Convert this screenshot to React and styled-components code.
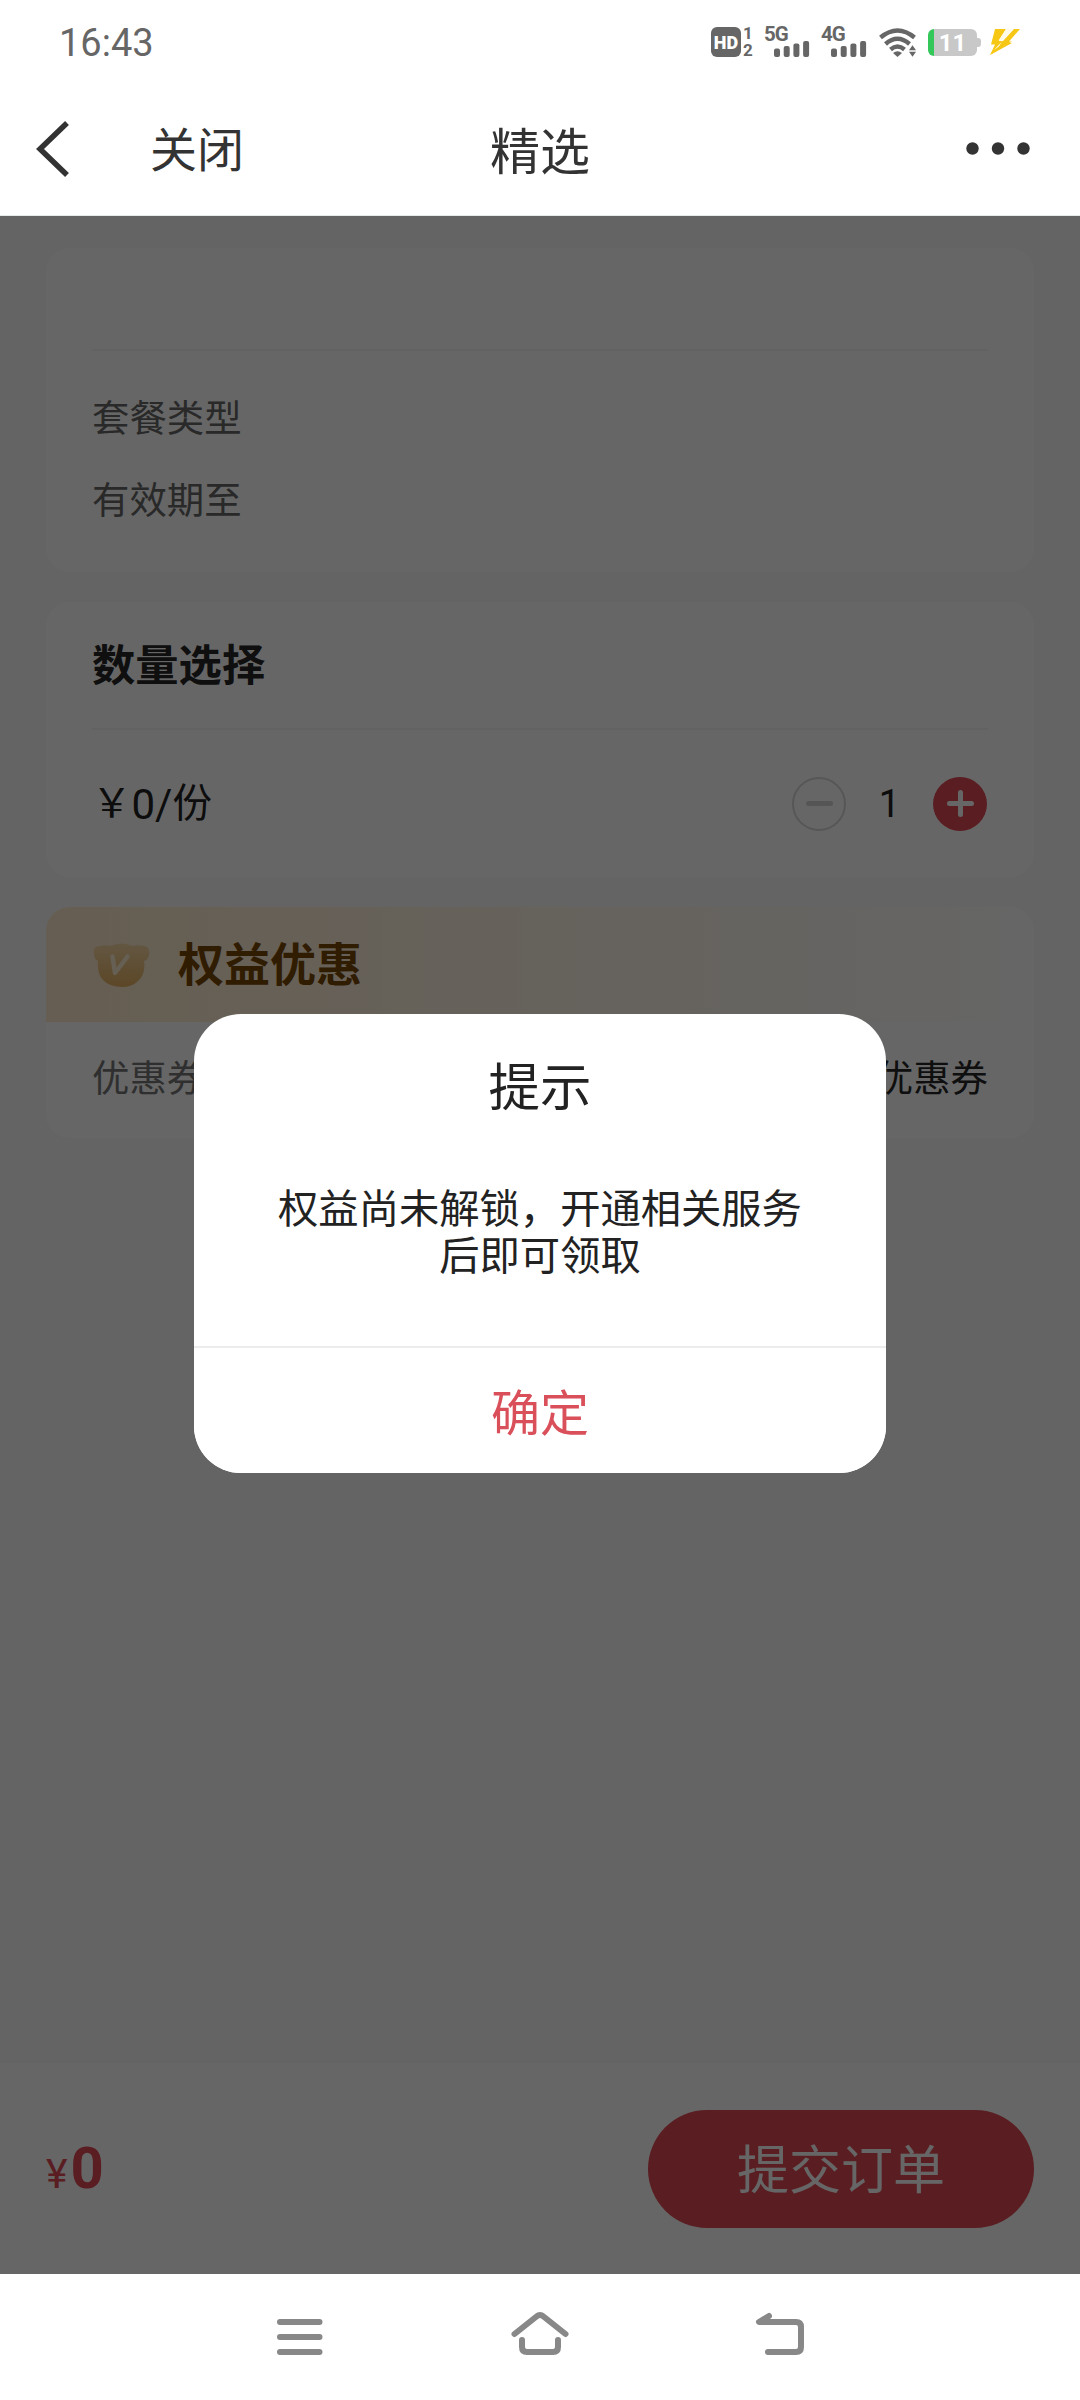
import React, { useState } from "react";
import styled, { createGlobalStyle } from "styled-components";

const BARS = [
  { x: 0, h: 8.5 },
  { x: 9.7, h: 11 },
  { x: 19.4, h: 13.5 },
  { x: 29.1, h: 16 },
];

const Network = ({ label }) => (
  <NetworkBox>
    <span>{label}</span>
    <svg width="36" height="16" viewBox="0 0 36 16">
      {BARS.map((bar) => (
        <rect
          key={bar.x}
          x={bar.x}
          y={16 - bar.h}
          width="6"
          height={bar.h}
          rx="2"
          fill="#666"
        />
      ))}
    </svg>
  </NetworkBox>
);

const WifiIcon = () => (
  <svg width="38" height="30" viewBox="0 0 38 30" fill="none">
    <g stroke="#666" strokeWidth="4.4">
      <path d="M1.5 10.5Q18.5 -3.5 35.5 10.5" />
      <path d="M6.5 17Q18.5 6.5 30.5 17" />
      <path d="M11.5 22.5Q18.5 16.5 25.5 22.5" />
    </g>
    <path d="M14 26Q18.5 22.5 23 26L18.5 30Z" fill="#666" />
    <path d="M30 23.2h7l-3.5 -5zM30 24.8h7l-3.5 5z" fill="#666" />
  </svg>
);

const BoltIcon = () => (
  <svg width="30" height="26" viewBox="0 0 30 26">
    <path
      d="M5 0H16L9 12H13L24 0H30L19 12.5H22L0 26L5 15.5H1Z"
      fill="#f7c716"
    />
    <path d="M16 0L8.5 11.5H13L4 21L14 14H10.5L23 0Z" fill="#fffbe8" />
    <path d="M11 14H22L0 26L8 19Z" fill="#f7c716" />
  </svg>
);

const BackIcon = () => (
  <svg width="34" height="58" viewBox="0 0 34 58" fill="none">
    <path d="M31 3L4 29L31 55" stroke="#333" strokeWidth="5.5" />
  </svg>
);

const MoreIcon = () => (
  <svg width="64" height="13" viewBox="0 0 64 13" fill="#333">
    <circle cx="6.5" cy="6.5" r="6.2" />
    <circle cx="32" cy="6.5" r="6.2" />
    <circle cx="57.5" cy="6.5" r="6.2" />
  </svg>
);

const VipIcon = () => (
  <svg width="57" height="44" viewBox="0 0 57 44">
    <defs>
      <linearGradient id="vip" x1="0" y1="0" x2="0" y2="1">
        <stop offset="0" stopColor="#f7d9a6" />
        <stop offset="1" stopColor="#e6b060" />
      </linearGradient>
    </defs>
    <path
      d="M3 4Q11 1 17 3Q28 -2 40 3Q47 1 54 4Q57 6 56 12Q55 17 51 18Q53 31 45 38Q39 44 29 44Q17 44 10 37Q4 31 5 18Q1 16 1 11Q0 6 3 4Z"
      fill="url(#vip)"
    />
    <path
      d="M19.5 13.5L22 30L34.5 13.5"
      fill="none"
      stroke="#ffeed2"
      strokeWidth="4.5"
      strokeLinecap="round"
      strokeLinejoin="round"
    />
  </svg>
);

const App = () => {
  const [count, setCount] = useState(1);
  const [open, setOpen] = useState(true);

  return (
    <Screen>
      <GlobalStyle />
      <StatusBar>
        <Clock>16:43</Clock>
        <StatusIcons>
          <HdBadge>HD</HdBadge>
          <SimNumbers>
            <span>1</span>
            <span>2</span>
          </SimNumbers>
          <Network label="5G" />
          <Network label="4G" />
          <WifiIcon />
          <Battery>11</Battery>
          <BoltIcon />
        </StatusIcons>
      </StatusBar>
      <Header>
        <HeaderLeft>
          <BackIcon />
          <span>关闭</span>
        </HeaderLeft>
        <h1>精选</h1>
        <HeaderRight>
          <MoreIcon />
        </HeaderRight>
      </Header>

      <Page>
        <Content>
          <Card>
            <CardTitle $height={103} />
            <InfoList>
              <Label>套餐类型</Label>
              <Label>有效期至</Label>
            </InfoList>
          </Card>
          <Card>
            <CardTitle $height={128}>数量选择</CardTitle>
            <CountRow>
              <UnitPrice>
                <span>￥</span>
                <i>0/</i>
                <span>份</span>
              </UnitPrice>
              <Stepper>
                <RoundButton onClick={() => setCount(Math.max(1, count - 1))}>
                  <svg width="27" height="27" viewBox="0 0 27 27">
                    <path d="M2.5 13.5H24.5" />
                  </svg>
                </RoundButton>
                <span>{count}</span>
                <RoundButton $primary onClick={() => setCount(count + 1)}>
                  <svg width="27" height="27" viewBox="0 0 27 27">
                    <path d="M2.5 13.5H24.5M13.5 2.5V24.5" />
                  </svg>
                </RoundButton>
              </Stepper>
            </CountRow>
          </Card>
          <Card>
            <BenefitTitle>
              <VipIcon />
              <span>权益优惠</span>
            </BenefitTitle>
            <CouponRow>
              <Label $color="#777">优惠券</Label>
              <Label $color="#262626">优惠券</Label>
            </CouponRow>
          </Card>
        </Content>
        <Footer>
          <Total>
            <small>¥</small>
            <b>0</b>
          </Total>
          <SubmitButton>提交订单</SubmitButton>
        </Footer>
        {open && (
          <Overlay>
            <Dialog>
              <DialogTitle>提示</DialogTitle>
              <DialogText>权益尚未解锁，开通相关服务后即可领取</DialogText>
              <DialogButton onClick={() => setOpen(false)}>确定</DialogButton>
            </Dialog>
          </Overlay>
        )}
      </Page>

      <NavBar>
        <svg width="58" height="46" viewBox="0 0 58 46">
          <path d="M9 12H48.5M9 27H48.5M9 42H48.5" />
        </svg>
        <svg width="58" height="46" viewBox="0 0 58 46">
          <path d="M3.5 24L25.5 6.5Q29 3.5 32.5 6.5L54.5 24M11 30V37Q11 42 16 42H42Q47 42 47 37V30" />
        </svg>
        <svg width="58" height="46" viewBox="0 0 58 46">
          <path d="M18 6L8 12H45Q50 12 50 17V37Q50 42 45 42H17" />
        </svg>
      </NavBar>
    </Screen>
  );
};

export default App;

const GlobalStyle = createGlobalStyle`
  * {
    box-sizing: border-box;
  }
  body {
    margin: 0;
    background: #fff;
    font-family: Roboto, "Noto Sans CJK SC", sans-serif;
  }
  button {
    border: none;
    padding: 0;
    font-family: inherit;
  }
  svg {
    display: block;
    flex: none;
  }
`;

const Screen = styled.div`
  display: flex;
  flex-direction: column;
  width: 1080px;
  height: 2400px;
  overflow: hidden;
`;

const StatusBar = styled.div`
  display: flex;
  justify-content: space-between;
  align-items: center;
  height: 84px;
  padding: 0 60px 0 59px;
`;

const Clock = styled.div`
  padding-top: 1px;
  font-size: 38px;
  color: #666;
`;

const StatusIcons = styled.div`
  display: flex;
  align-items: center;
`;

const HdBadge = styled.div`
  width: 30px;
  height: 30px;
  border-radius: 6px;
  background: #666;
  color: #fff;
  font-size: 18px;
  font-weight: 900;
  line-height: 31px;
  text-align: center;
`;

const SimNumbers = styled.div`
  display: flex;
  flex-direction: column;
  justify-content: space-between;
  height: 30px;
  width: 10px;
  margin-left: 2px;
  font-size: 17px;
  font-weight: 700;
  line-height: 13px;
  color: #666;
  text-align: center;
`;

const NetworkBox = styled.div`
  display: flex;
  flex-direction: column;
  justify-content: space-between;
  width: 46px;
  height: 30px;
  margin-left: 11px;
  color: #666;
  span {
    font-size: 20.5px;
    font-weight: 700;
    line-height: 14px;
    letter-spacing: -1px;
  }
  svg {
    margin: 0 0 0 10px;
  }
  & + svg {
    margin-left: 12px;
  }
`;

const Battery = styled.div`
  position: relative;
  width: 49px;
  height: 27px;
  margin: 0 13px 0 11px;
  border-radius: 6px;
  background: linear-gradient(to right, #34c759 6px, #c8c8c8 6px);
  color: #fff;
  font-size: 24px;
  font-weight: 700;
  line-height: 28px;
  text-align: center;
  &::after {
    content: "";
    position: absolute;
    right: -4px;
    top: 9px;
    width: 4px;
    height: 9px;
    border-radius: 0 3px 3px 0;
    background: #c8c8c8;
  }
`;

const Header = styled.div`
  display: grid;
  grid-template-columns: 1fr auto 1fr;
  align-items: center;
  height: 132px;
  padding: 0 50px 2px 36px;
  border-bottom: 1px solid #e6eae9;
  color: #333;
  h1 {
    margin: 0 0 1px 14px;
    font-size: 50px;
    font-weight: 400;
  }
`;

const HeaderLeft = styled.div`
  display: flex;
  align-items: center;
  gap: 80px;
  font-size: 47px;
  span {
    padding-bottom: 4px;
  }
`;

const HeaderRight = styled.div`
  display: flex;
  justify-content: flex-end;
`;

const Page = styled.div`
  position: relative;
  display: flex;
  flex-direction: column;
  height: 2058px;
  background: #fbfbfb;
`;

const Content = styled.div`
  display: flex;
  flex-direction: column;
  flex: 1;
  gap: 30px;
  padding: 32px 46px;
`;

const Card = styled.div`
  border-radius: 24px;
  background: #fff;
  overflow: hidden;
`;

const CardTitle = styled.div`
  height: ${(props) => props.$height}px;
  margin: 0 46px;
  border-bottom: 2px solid #f5f5f5;
  font-size: 43.3px;
  font-weight: 700;
  line-height: 130px;
  color: #262626;
`;

const Label = styled.div`
  font-size: 37.4px;
  line-height: 40px;
  color: ${(props) => props.$color || "#666"};
`;

const InfoList = styled.div`
  display: flex;
  flex-direction: column;
  gap: 42px;
  height: 221px;
  padding: 48px 46px 0;
`;

const CountRow = styled.div`
  display: flex;
  justify-content: space-between;
  align-items: center;
  height: 147px;
  padding: 0 47px 0 46px;
`;

const UnitPrice = styled.div`
  display: flex;
  align-items: center;
  font-size: 39.5px;
  line-height: 50px;
  color: #222;
  i {
    padding-top: 2px;
    font-size: 42px;
    font-style: normal;
  }
`;

const Stepper = styled.div`
  display: flex;
  align-items: center;
  span {
    width: 87px;
    font-size: 38px;
    color: #222;
    text-align: center;
  }
`;

const RoundButton = styled.button`
  display: flex;
  align-items: center;
  justify-content: center;
  width: 54px;
  height: 54px;
  border: ${(props) => (props.$primary ? "none" : "2px solid #d8d8d8")};
  border-radius: 50%;
  background: ${(props) => (props.$primary ? "#e04b55" : "none")};
  svg {
    stroke: ${(props) => (props.$primary ? "#fff" : "#d4d4d4")};
    stroke-width: 5;
    stroke-linecap: round;
  }
`;

const BenefitTitle = styled.div`
  display: flex;
  align-items: center;
  gap: 28px;
  height: 115px;
  padding: 0 47px;
  background: linear-gradient(to right, #ffebcc, #fff);
  font-size: 46px;
  font-weight: 700;
  color: #784800;
  span {
    padding-bottom: 8px;
  }
`;

const CouponRow = styled.div`
  display: flex;
  justify-content: space-between;
  align-items: center;
  height: 116px;
  padding: 0 46px 3px;
`;

const Footer = styled.div`
  display: flex;
  justify-content: space-between;
  align-items: center;
  height: 211px;
  padding: 0 46px;
  background: #fff;
`;

const Total = styled.div`
  display: flex;
  align-items: baseline;
  padding-bottom: 2px;
  color: #e04b55;
  small {
    font-size: 41px;
  }
  b {
    font-size: 58px;
    margin-left: 3px;
  }
`;

const SubmitButton = styled.button`
  width: 386px;
  height: 118px;
  padding-bottom: 5px;
  border-radius: 59px;
  background: #e04b55;
  color: #fff;
  font-size: 52px;
`;

const Overlay = styled.div`
  position: absolute;
  inset: 0;
  background: rgba(0, 0, 0, 0.6);
  display: flex;
  justify-content: center;
  align-items: flex-start;
  padding-top: 798px;
`;

const Dialog = styled.div`
  display: flex;
  flex-direction: column;
  width: 692px;
  height: 459px;
  border-radius: 47px;
  background: #fff;
  overflow: hidden;
  color: #222;
  text-align: center;
`;

const DialogTitle = styled.div`
  height: 172px;
  padding-top: 39px;
  font-size: 51.5px;
  line-height: 72px;
`;

const DialogText = styled.div`
  flex: 1;
  padding: 0 80px;
  font-size: 40.3px;
  line-height: 47px;
`;

const DialogButton = styled.button`
  height: 127px;
  padding-bottom: 3px;
  border-top: 2px solid #ececec;
  background: #fff;
  color: #d9505a;
  font-size: 49px;
`;

const NavBar = styled.div`
  display: flex;
  justify-content: center;
  gap: 182px;
  height: 126px;
  padding-top: 36px;
  background: #fff;
  svg {
    fill: none;
    stroke: #888;
    stroke-width: 6;
    stroke-linecap: round;
    stroke-linejoin: round;
  }
`;
